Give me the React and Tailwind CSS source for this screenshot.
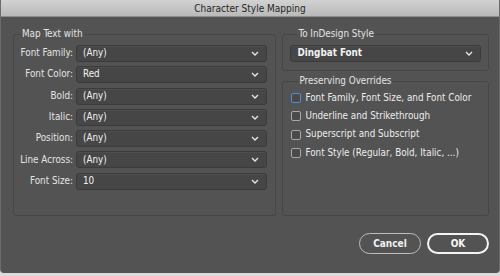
import { useState } from "react";

const Chevron = () => (
  <svg width="8" height="5" viewBox="0 0 8 5" className="shrink-0">
    <path d="M1 1l3 3 3-3" fill="none" stroke="#e8e8e8" strokeWidth="1.3" />
  </svg>
);

const Select = ({ value, bold }) => (
  <div className="h-[17px] flex items-center justify-between pl-[6px] pr-[7px] bg-[#464646] border border-[#3b3b3b] rounded-[3px] shadow-[inset_0_1px_0_#4e4e4e]">
    <span className={`text-[9.8px] text-[#f2f2f2] ${bold ? "font-bold" : "font-medium"}`}>{value}</span>
    <Chevron />
  </div>
);

const mapRows = [
  ["Font Family:", "(Any)"],
  ["Font Color:", "Red"],
  ["Bold:", "(Any)"],
  ["Italic:", "(Any)"],
  ["Position:", "(Any)"],
  ["Line Across:", "(Any)"],
  ["Font Size:", "10"],
];

const overrides = [
  "Font Family, Font Size, and Font Color",
  "Underline and Strikethrough",
  "Superscript and Subscript",
  "Font Style (Regular, Bold, Italic, ...)",
];

const Group = ({ title, className, children }) => (
  <fieldset className={`border border-[#474747] rounded-[3px] ${className}`}>
    <legend className="ml-[7px] px-[1px] text-[9.8px] leading-[12px] text-[#e4e4e4]">{title}</legend>
    {children}
  </fieldset>
);

export default function App() {
  const [checked, setChecked] = useState([false, false, false, false]);

  const toggle = (i) => setChecked(checked.map((c, j) => (j === i ? !c : c)));

  return (
    <div
      className="w-[500px] h-[276px] bg-[#dcdcdc] overflow-hidden"
      style={{ fontFamily: '"DejaVu Sans Condensed", "DejaVu Sans", "Liberation Sans", sans-serif', fontStretch: "condensed" }}
    >
      <div className="h-[273px] bg-[#535353] border-x border-[#6b6b6b] rounded-b-[4px] flex flex-col">
        {/* title bar */}
        <div className="h-[17px] shrink-0 flex items-center justify-center bg-gradient-to-b from-[#d2d2d2] to-[#b9b9b9] border-b border-[#8e8e8e] text-[10px] text-[#262626]">
          Character Style Mapping
        </div>

        <div className="flex gap-[6px] pl-[12px] pr-[10px] pt-[11px]">
          <Group title="Map Text with" className="w-[264px] h-[188px] pr-[8px] pt-[5px]">
            <div className="flex flex-col gap-[4.3px]">
              {mapRows.map(([label, value]) => (
                <div key={label} className="flex items-center">
                  <span className="w-[62px] shrink-0 text-right pr-[3px] text-[9.8px] text-[#e4e4e4]">{label}</span>
                  <div className="flex-1">
                    <Select value={value} />
                  </div>
                </div>
              ))}
            </div>
          </Group>

          <div className="flex flex-col gap-[4px] w-[207px]">
            <Group title="To InDesign Style" className="h-[43px] px-[7px] pt-[5px]">
              <Select value="Dingbat Font" bold />
            </Group>
            <Group title="Preserving Overrides" className="h-[141px] pl-[8px] pt-[5px]">
              <div className="flex flex-col gap-[6.4px]">
                {overrides.map((text, i) => (
                  <label key={text} className="flex items-center gap-[4px] h-[12px]" onClick={() => toggle(i)}>
                    <span
                      className={`w-[10px] h-[10px] rounded-[2px] bg-[#4a4a4a] border flex items-center justify-center ${i === 0 ? "border-[#4b8fdc] border-[1.5px]" : "border-[#a8a8a8]"}`}
                    >
                      {checked[i] && (
                        <svg width="7" height="6" viewBox="0 0 7 6">
                          <path d="M1 3l1.8 1.8L6 1" fill="none" stroke="#f0f0f0" strokeWidth="1.3" />
                        </svg>
                      )}
                    </span>
                    <span className="text-[9.8px] font-medium text-[#ececec]">{text}</span>
                  </label>
                ))}
              </div>
            </Group>
          </div>
        </div>

        <div className="flex justify-end gap-[6px] pr-[10px] mt-[17px]">
          <button className="w-[62px] h-[21px] rounded-full border border-[#bdbdbd] text-[10px] font-bold text-[#f0f0f0]">
            Cancel
          </button>
          <button className="w-[62px] h-[21px] rounded-full border-[2px] border-[#f4f4f4] text-[10px] font-bold text-[#f8f8f8]">
            OK
          </button>
        </div>
      </div>
    </div>
  );
}
